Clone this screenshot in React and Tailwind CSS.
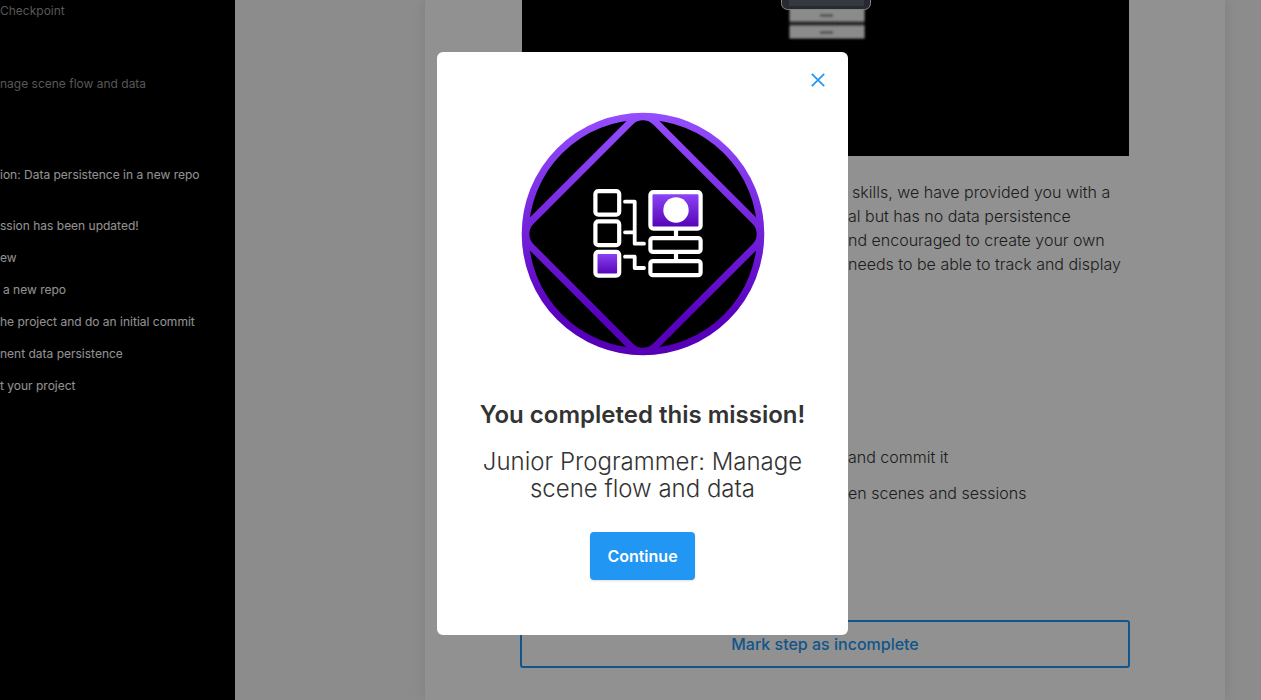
const steps = [
  'ssion has been updated!',
  'ew',
  'a new repo',
  'he project and do an initial commit',
  'nent data persistence',
  't your project',
];

function Sidebar() {
  return (
    <nav
      aria-label="Mission steps"
      className="w-[235px] shrink-0 overflow-hidden bg-black text-xs leading-4 whitespace-nowrap text-white"
    >
      <p className="pt-[3px] text-[#999]">Checkpoint</p>
      <p className="pt-[57px] text-[#999]">nage scene flow and data</p>
      <p className="pt-[75px]">ion: Data persistence in a new repo</p>
      <ul className="flex flex-col gap-4 pt-[35px]">
        {steps.map((step) => (
          <li key={step} className={step === 'a new repo' ? 'pl-[3px]' : ''}>
            <a href="#step">{step}</a>
          </li>
        ))}
      </ul>
    </nav>
  );
}

function GamePreview() {
  return (
    <div className="flex h-[156px] justify-center bg-black">
      <svg width="92" height="44" viewBox="0 0 92 44" aria-hidden="true">
        <defs>
          <filter id="soften" x="-10%" y="-30%" width="120%" height="160%">
            <feGaussianBlur stdDeviation="1.100" />
          </filter>
        </defs>
        <g filter="url(#soften)">
          <rect x="9.500" y="8" width="75" height="30.500" fill="#555" />
          <rect x="9.500" y="8" width="75" height="13" fill="#f4f4f4" />
          <rect x="9.500" y="26" width="75" height="12.500" fill="#f4f4f4" />
          <rect x="40" y="14" width="13" height="3" fill="#999" />
          <rect x="40" y="31" width="13" height="3" fill="#999" />
        </g>
        <rect x="1.500" y="-12" width="89" height="21.500" rx="6" fill="#454c57" stroke="#e8e8e8" />
        <rect x="9" y="0" width="75" height="6" fill="#5c6370" />
      </svg>
    </div>
  );
}

function Emblem() {
  return (
    <svg width="244" height="244" viewBox="0 0 244 244" role="img" aria-label="Mission badge">
      <defs>
        <linearGradient id="ring" gradientUnits="userSpaceOnUse" x1="0" y1="0" x2="0" y2="244">
          <stop offset="0" stopColor="#954fff" />
          <stop offset="0.85" stopColor="#5800be" />
          <stop offset="1" stopColor="#5500b5" />
        </linearGradient>
        <linearGradient id="tile" x1="0" y1="0" x2="0" y2="1">
          <stop offset="0" stopColor="#8f48fa" />
          <stop offset="1" stopColor="#5200b2" />
        </linearGradient>
        <clipPath id="disc">
          <circle cx="122" cy="122" r="120" />
        </clipPath>
      </defs>
      <circle cx="122" cy="122" r="118" fill="#000" />
      <path
        clipPath="url(#disc)"
        d="M134.700 10.100L233.900 109.300A18 18 0 0 1 233.900 134.700L134.700 233.900A18 18 0 0 1 109.300 233.900L10.100 134.700A18 18 0 0 1 10.100 109.300L109.300 10.100A18 18 0 0 1 134.700 10.100Z"
        fill="none"
        stroke="url(#ring)"
        strokeWidth="7"
      />
      <circle cx="122" cy="122" r="117.800" fill="none" stroke="url(#ring)" strokeWidth="7" />
      <g fill="none" stroke="#fff" strokeWidth="4.200" strokeLinecap="round" strokeLinejoin="round">
        <rect x="74.400" y="79.100" width="23.800" height="23.600" rx="3" />
        <rect x="74.400" y="109.400" width="23.800" height="23.800" rx="3" />
        <rect x="74.400" y="139.800" width="23.800" height="23.800" rx="3" fill="url(#tile)" />
        <rect x="129.400" y="80.100" width="50.200" height="36.500" rx="3" fill="url(#tile)" />
        <rect x="129.400" y="126.100" width="50.200" height="13.800" rx="2.500" />
        <rect x="129.400" y="149.100" width="50.200" height="14.100" rx="2.500" />
        <path d="M155 118v7M155 141v7" strokeLinecap="butt" />
        <path d="M104 89.700H113.700V131.700H123M104 120.300H113.700M104 144.700H113.700V156H123" strokeWidth="3.800" />
      </g>
      <circle cx="155" cy="98" r="12.700" fill="#fff" />
    </svg>
  );
}

export default function App() {
  return (
    <div className="flex min-h-screen overflow-hidden bg-[#f6f6f6] font-['Inter',sans-serif] text-[#333]">
      <Sidebar />
      <main className="ml-[190px] mr-9 flex-1 bg-white px-[95px] shadow-[0_0_12px_rgba(0,0,0,0.1)]">
        <article className="flex flex-col">
          <div className="pr-px pl-0.5">
            <GamePreview />
          </div>
          <p className="flex flex-col pt-6 pl-[328px] text-base leading-6 font-light whitespace-nowrap">
            <span className="pl-1">skills, we have provided you with a</span>
            <span>al but has no data persistence</span>
            <span>nd encouraged to create your own</span>
            <span>needs to be able to track and display</span>
          </p>
          <ul className="flex flex-col gap-3 pt-[169px] pl-[328px] text-base leading-6 font-light whitespace-nowrap">
            <li>and commit it</li>
            <li>en scenes and sessions</li>
          </ul>
          <button
            type="button"
            className="mt-[115px] h-12 rounded-[3px] border-2 border-[#2196f3] text-base font-medium text-[#2196f3]"
          >
            Mark step as incomplete
          </button>
        </article>
      </main>

      <div className="fixed inset-0 flex items-center justify-center bg-black/43 pb-3.5 pl-6">
        <section
          role="dialog"
          aria-modal="true"
          aria-labelledby="dialog-title"
          className="flex w-[411px] flex-col items-center rounded-md bg-white px-8 pt-4 pb-[55px] text-center"
        >
          <button type="button" aria-label="Close" className="-mr-3.5 self-end p-1 text-[#2196f3]">
            <svg width="16" height="16" viewBox="0 0 16 16" aria-hidden="true">
              <path d="M1.800 1.800L14.200 14.200M14.200 1.800L1.800 14.200" stroke="currentColor" strokeWidth="1.700" fill="none" />
            </svg>
          </button>
          <div className="pt-5">
            <Emblem />
          </div>
          <h1 id="dialog-title" className="pt-[43px] text-2xl leading-8 font-semibold">
            You completed this mission!
          </h1>
          <h2 className="pt-[17px] text-2xl leading-[27px] font-light">
            Junior Programmer: Manage scene flow and data
          </h2>
          <button
            type="button"
            className="mt-[30px] h-12 rounded bg-[#2196f3] px-[17px] text-base font-semibold text-white shadow-sm"
          >
            Continue
          </button>
        </section>
      </div>
    </div>
  );
}
